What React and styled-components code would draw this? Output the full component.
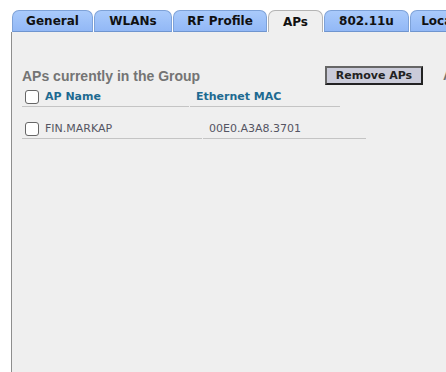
import React from 'react';
import styled, { createGlobalStyle } from 'styled-components';

const GlobalStyle = createGlobalStyle`
  html, body {
    margin: 0;
    padding: 0;
    background: #fff;
    overflow: hidden;
  }
  body {
    font-family: 'DejaVu Sans', Verdana, sans-serif;
  }
`;

const Page = styled.div`
  width: 446px;
  height: 372px;
  padding-left: 11px;
  box-sizing: border-box;
  display: flex;
  flex-direction: column;
  overflow: hidden;
`;

const TabBar = styled.div`
  display: flex;
  gap: 1px;
  height: 32px;
  padding: 10px 0 0 1px;
  box-sizing: border-box;
  white-space: nowrap;
`;

const Tab = styled.div`
  flex: none;
  width: ${({ w }) => w}px;
  height: 22px;
  box-sizing: border-box;
  display: flex;
  align-items: center;
  justify-content: center;
  font-size: 12px;
  font-weight: bold;
  color: #111;
  border: 1px solid ${({ active }) => (active ? '#b4b4b4' : '#7ea2d8')};
  border-bottom: ${({ active }) => (active ? 'none' : '1px solid #6f95cf')};
  border-radius: 7px 7px 0 0;
  background: ${({ active }) =>
    active ? '#efefef' : 'linear-gradient(#a9cafb, #92b8f6)'};
`;

const Panel = styled.div`
  flex: 1;
  background: #efefef;
  border-left: 1px solid #8e8e8e;
  padding: 33px 0 0 10px;
  display: flex;
  gap: 20px;
`;

const Main = styled.div`
  flex: none;
  width: 401px;
`;

const TopRow = styled.div`
  display: flex;
  justify-content: space-between;
  align-items: center;
  height: 20px;
`;

const Heading = styled.div`
  font-family: 'Liberation Sans', Arial, sans-serif;
  font-size: 14px;
  font-weight: bold;
  color: #747474;
  padding-top: 2px;
`;

const Button = styled.button`
  width: 98px;
  height: 19px;
  padding: 0;
  font-family: 'DejaVu Sans', Verdana, sans-serif;
  font-size: 11px;
  font-weight: bold;
  color: #222;
  background: #cacbd9;
  border: 2px solid;
  border-color: #666 #222 #222 #666;
`;

const Side = styled.div`
  font-family: 'Liberation Sans', Arial, sans-serif;
  font-size: 14px;
  font-weight: bold;
  color: #747474;
  padding-top: 2px;
  white-space: nowrap;
`;

const Table = styled.div`
  display: grid;
  grid-template-columns: ${({ cols }) => cols};
  column-gap: 1px;
  margin-top: ${({ top }) => top}px;
`;

const Cell = styled.div`
  display: flex;
  align-items: center;
  gap: 6px;
  height: ${({ h }) => h}px;
  box-sizing: border-box;
  border-bottom: 1px solid #c4c4c4;
  padding-left: ${({ pad }) => pad || 0}px;
  font-size: 11px;
  font-weight: ${({ head }) => (head ? 'bold' : 'normal')};
  color: ${({ head }) => (head ? '#1d6a91' : '#555563')};
`;

const Check = styled.span`
  width: 12px;
  height: 12px;
  border: 1px solid #666;
  border-radius: 3px;
  background: #fff;
  flex: none;
`;

const tabs = [
  { label: 'General', w: 81 },
  { label: 'WLANs', w: 78 },
  { label: 'RF Profile', w: 94 },
  { label: 'APs', w: 55, active: true },
  { label: '802.11u', w: 85 },
  { label: 'Location', w: 80 },
];

export default function App() {
  return (
    <>
      <GlobalStyle />
      <Page>
        <TabBar>
          {tabs.map((t) => (
            <Tab key={t.label} w={t.w} active={t.active}>
              {t.label}
            </Tab>
          ))}
        </TabBar>
        <Panel>
          <Main>
            <TopRow>
              <Heading>APs currently in the Group</Heading>
              <Button>Remove APs</Button>
            </TopRow>
            <Table cols="167px 150px" top={2}>
              <Cell h={20} pad={3} head>
                <Check />
                AP Name
              </Cell>
              <Cell h={20} pad={6} head>
                Ethernet MAC
              </Cell>
            </Table>
            <Table cols="180px 163px" top={12}>
              <Cell h={20} pad={3}>
                <Check />
                FIN.MARKAP
              </Cell>
              <Cell h={20} pad={6}>
                00E0.A3A8.3701
              </Cell>
            </Table>
          </Main>
          <Side>AP Group</Side>
        </Panel>
      </Page>
    </>
  );
}
